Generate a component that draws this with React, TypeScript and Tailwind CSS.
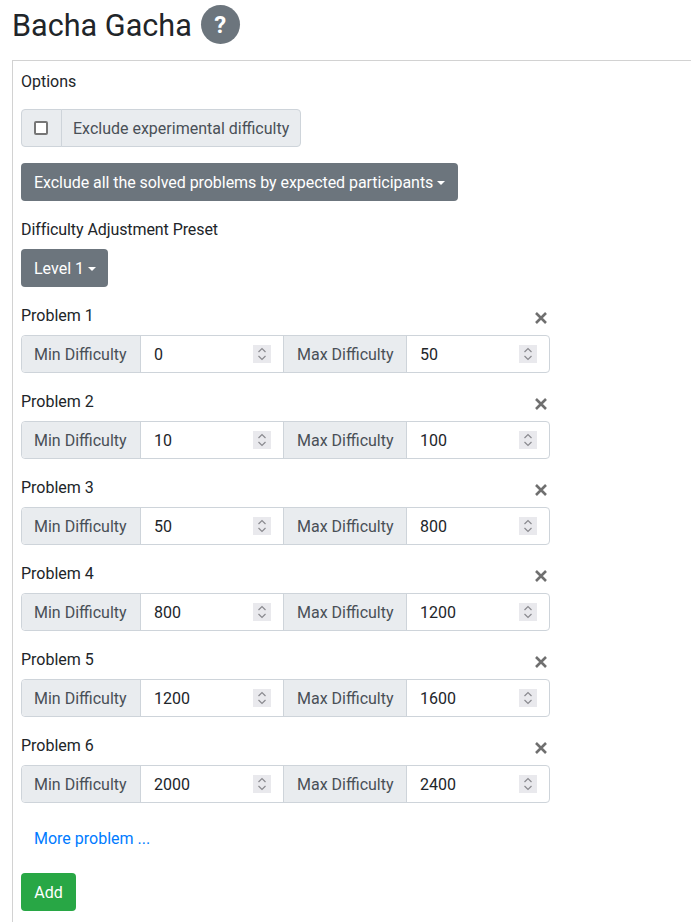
const problems = [
  { min: '0', max: '50' },
  { min: '10', max: '100' },
  { min: '50', max: '800' },
  { min: '800', max: '1200' },
  { min: '1200', max: '1600' },
  { min: '2000', max: '2400' },
];

function Spinner() {
  return (
    <span className="flex h-[18px] w-[18px] shrink-0 items-center justify-center bg-[#e9e9ed]">
      <svg width="10" height="14" viewBox="0 0 10 14" fill="none" stroke="#8a8a8f" strokeWidth="1.2">
        <path d="M1.5 5 5 1.5 8.5 5" />
        <path d="M1.5 9 5 12.5 8.5 9" />
      </svg>
    </span>
  );
}

function Caret() {
  return <span className="ml-[4px] inline-block h-0 w-0 border-x-4 border-t-4 border-x-transparent border-t-white align-[3px]" />;
}

function NumberField({ value }: { value: string }) {
  return (
    <div className="flex h-full flex-1 items-center justify-between pl-[13px] pr-[12px] text-[#212529]">
      <span className="pt-[2px]">{value}</span>
      <Spinner />
    </div>
  );
}

export default function App() {
  return (
    <div className="h-[922px] overflow-hidden whitespace-nowrap bg-white pl-3 text-[16px] leading-6 text-[#212529] font-['Roboto','Noto_Sans',sans-serif]">
      <div className="flex h-[60px] items-start">
        <h2 className="mt-[6px] text-[30.6px] leading-[39px]">Bacha Gacha</h2>
        <span className="ml-[9px] mt-[5px] flex h-[39px] w-[39px] items-center justify-center rounded-full bg-[#6c757d] text-[24px] font-bold text-white">?</span>
      </div>
      <div className="h-[900px] border-l border-t border-[#d2d2d2] p-2">
        <div className="mb-4 h-6 pt-px">Options</div>
        <div className="mb-4 flex h-[38px] w-[280px]">
          <div className="flex w-[41px] items-center justify-center rounded-l border border-[#ced4da] bg-[#e9ecef] pr-[2px]">
            <span className="h-[14px] w-[14px] rounded-[2px] border-2 border-[#767676] bg-white" />
          </div>
          <div className="-ml-px flex flex-1 items-center rounded-r border border-[#ced4da] bg-[#e9ecef] pl-[11px] pt-[2px] text-[#495057]">Exclude experimental difficulty</div>
        </div>
        <button className="mb-4 block h-[38px] w-[437px] rounded bg-[#6c757d] pl-[13px] pt-[2px] text-left tracking-[-0.05px] text-white">
          Exclude all the solved problems by expected participants
          <Caret />
        </button>
        <div className="mb-2 h-6 pt-px tracking-[-0.08px]">Difficulty Adjustment Preset</div>
        <button className="mb-4 block h-[38px] w-[87px] rounded bg-[#6c757d] pl-[13px] pt-[2px] text-left text-white">
          Level 1
          <Caret />
        </button>
        {problems.map((p, i) => (
          <div key={i} className="mb-4 w-[529px]">
            <div className="mb-2 flex h-6 items-center justify-between">
              <span className="pt-[2px]">Problem {i + 1}</span>
              <svg className="mr-[3px] mt-[6px]" width="12" height="12" viewBox="0 0 12 12" stroke="#6f6f6f" strokeWidth="2.6">
                <path d="M1 1 11 11M11 1 1 11" />
              </svg>
            </div>
            <div className="flex h-[38px] items-center rounded border border-[#ced4da]">
              <div className="flex h-full w-[118px] items-center rounded-l bg-[#e9ecef] pl-3 pt-[2px] text-[#495057]">Min Difficulty</div>
              <div className="h-full w-px bg-[#ced4da]" />
              <NumberField value={p.min} />
              <div className="h-full w-px bg-[#ced4da]" />
              <div className="flex h-full w-[122px] items-center bg-[#e9ecef] pl-[13px] pt-[2px] text-[#495057]">Max Difficulty</div>
              <div className="h-full w-px bg-[#ced4da]" />
              <NumberField value={p.max} />
            </div>
          </div>
        ))}
        <a className="mb-4 flex h-[38px] items-center pl-[13px] pt-[2px] text-[#007bff]">More problem ...</a>
        <button className="block h-[38px] w-[55px] rounded bg-[#28a745] pt-[2px] text-white">Add</button>
      </div>
    </div>
  );
}
